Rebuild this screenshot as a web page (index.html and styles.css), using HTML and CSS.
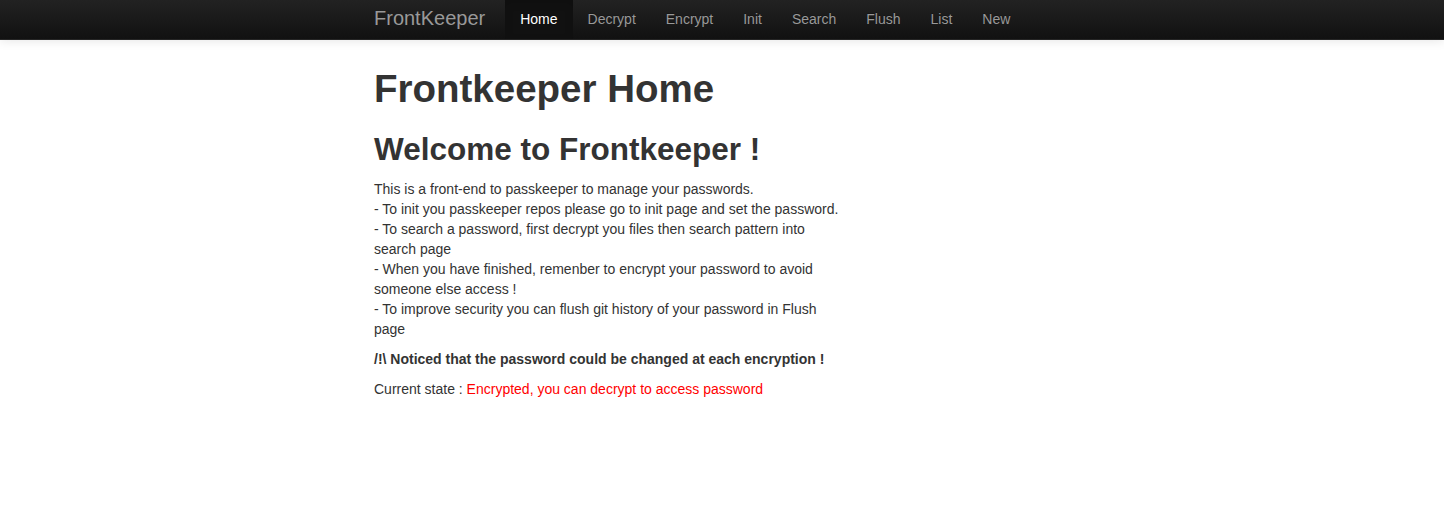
FILE: index.html
```html
<!DOCTYPE html>
<html>
<head>
<meta charset="utf-8">
<title>FrontKeeper</title>
<link rel="stylesheet" href="styles.css">
</head>
<body>
<div class="navbar">
  <div class="nav-inner">
    <a class="brand" href="#">FrontKeeper</a>
    <ul class="nav">
      <li class="active"><a href="#">Home</a></li>
      <li><a href="#">Decrypt</a></li>
      <li><a href="#">Encrypt</a></li>
      <li><a href="#">Init</a></li>
      <li><a href="#">Search</a></li>
      <li><a href="#">Flush</a></li>
      <li><a href="#">List</a></li>
      <li><a href="#">New</a></li>
    </ul>
  </div>
</div>
<div class="container">
  <div class="content">
    <h1>Frontkeeper Home</h1>
    <h2>Welcome to Frontkeeper !</h2>
    <p>This is a front-end to passkeeper to manage your passwords.<br>
    - To init you passkeeper repos please go to init page and set the password.<br>
    - To search a password, first decrypt you files then search pattern into search page<br>
    - When you have finished, remenber to encrypt your password to avoid someone else access !<br>
    - To improve security you can flush git history of your password in Flush page</p>
    <p><strong>/!\ Noticed that the password could be changed at each encryption !</strong></p>
    <p>Current state : <span class="state">Encrypted, you can decrypt to access password</span></p>
  </div>
</div>
</body>
</html>
```
FILE: styles.css
```css
html, body {
  margin: 0;
  padding: 0;
}
body {
  font-family: "Liberation Sans", Arial, Helvetica, sans-serif;
  font-size: 14px;
  line-height: 20px;
  color: #333;
  background: #fff;
}
.navbar {
  height: 39px;
  background-color: #1b1b1b;
  background-image: linear-gradient(to bottom, #222222, #111111);
  border-bottom: 1px solid #252525;
  box-shadow: 0 1px 10px rgba(0, 0, 0, 0.1);
}
.nav-inner {
  width: 696px;
  margin: 0 auto;
  display: flex;
  align-items: stretch;
}
.brand {
  display: block;
  padding: 8px 20px 11px 20px;
  margin-left: -20px;
  font-size: 20px;
  line-height: 20px;
  font-weight: 200;
  color: #999;
  text-decoration: none;
}
.nav {
  list-style: none;
  margin: 0;
  padding: 0;
  display: flex;
}
.nav li a {
  display: block;
  padding: 9px 15px 10px;
  color: #999;
  text-decoration: none;
  text-shadow: 0 -1px 0 rgba(0, 0, 0, 0.25);
}
.nav li.active a {
  color: #fff;
  background-color: #111;
  box-shadow: inset 0 3px 8px rgba(0, 0, 0, 0.125);
}
.container {
  width: 696px;
  margin: 0 auto;
  padding-top: 19px;
}
.content {
  width: 472px;
}
h1, h2 {
  margin: 10px 0;
  font-weight: bold;
  line-height: 40px;
  color: #333;
}
h1 {
  font-size: 38.5px;
  margin-bottom: 20px;
}
h2 {
  font-size: 31.5px;
}
p {
  margin: 0 0 10px;
}
.state {
  color: #f00;
}
```
